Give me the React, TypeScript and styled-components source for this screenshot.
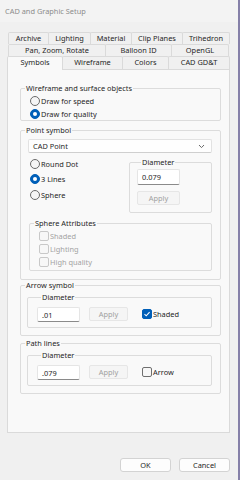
import React from 'react';
import styled, { createGlobalStyle } from 'styled-components';

const GlobalStyle = createGlobalStyle`
  html, body {
    margin: 0;
    padding: 0;
  }
  body {
    font-family: 'Segoe UI', 'Noto Sans', sans-serif;
    font-size: 7.4px;
    color: #262626;
  }
`;

function Radio({ label, checked, top }: { label: string; checked?: boolean; top?: boolean }) {
  return (
    <OptionRow $h={top ? 15.5 : 13}>
      <RadioDot $checked={!!checked} />
      <span>{label}</span>
    </OptionRow>
  );
}

function Check({ label, checked, disabled }: { label: string; checked?: boolean; disabled?: boolean }) {
  return (
    <OptionRow $h={13} $disabled={disabled}>
      <Box $checked={!!checked} $disabled={disabled}>
        {checked && (
          <svg width="8" height="8" viewBox="0 0 8 8">
            <path d="M1.5 4.2 L3.2 5.8 L6.6 2.2" fill="none" stroke="#fff" strokeWidth="1.1" />
          </svg>
        )}
      </Box>
      <span>{label}</span>
    </OptionRow>
  );
}

function DiameterRow({ value, check, checked }: { value: string; check: string; checked?: boolean }) {
  return (
    <InnerGroup>
      <Caption>Diameter</Caption>
      <InlineRow>
        <TextBox>{value}</TextBox>
        <ApplyButton $w={39} $mt={0}>Apply</ApplyButton>
        <Check label={check} checked={checked} />
      </InlineRow>
    </InnerGroup>
  );
}

function App() {
  return (
    <Window>
      <GlobalStyle />
      <TitleBar>CAD and Graphic Setup</TitleBar>
      <TabStack>
        <TabRow $left={8}>
          <Tab $w={41}>Archive</Tab>
          <Tab $w={43}>Lighting</Tab>
          <Tab $w={42}>Material</Tab>
          <Tab $w={52}>Clip Planes</Tab>
          <Tab $w={48}>Trihedron</Tab>
        </TabRow>
        <TabRow $left={8}>
          <Tab $w={98}>Pan, Zoom, Rotate</Tab>
          <Tab $w={67}>Balloon ID</Tab>
          <Tab $w={58}>OpenGL</Tab>
        </TabRow>
        <TabRow $left={7} $h={13}>
          <Tab $w={56} $active>Symbols</Tab>
          <Tab $w={61}>Wireframe</Tab>
          <Tab $w={47}>Colors</Tab>
          <Tab $w={62}>CAD GD&amp;T</Tab>
        </TabRow>
      </TabStack>

      <Panel>
        <Group $mt={18}>
          <Caption>Wireframe and surface objects</Caption>
          <Indent>
            <Radio label="Draw for speed" />
            <Radio label="Draw for quality" checked />
          </Indent>
        </Group>

        <Group $mt={9} $pb={8}>
          <Caption>Point symbol</Caption>
          <Select>
            <span>CAD Point</span>
            <svg width="7" height="5" viewBox="0 0 7 5">
              <path d="M1 1 L3.5 3.6 L6 1" fill="none" stroke="#6a6a6a" strokeWidth="1" />
            </svg>
          </Select>
          <SymbolRow>
            <Indent>
              <Radio label="Round Dot" top />
              <Radio label="3 Lines" checked top />
              <Radio label="Sphere" top />
            </Indent>
            <DiameterBox>
              <Caption>Diameter</Caption>
              <TextBox $h={16}>0.079</TextBox>
              <ApplyButton $w={43} $mt={6}>Apply</ApplyButton>
            </DiameterBox>
          </SymbolRow>
          <SubGroup>
            <Caption>Sphere Attributes</Caption>
            <Indent>
              <Check label="Shaded" disabled />
              <Check label="Lighting" disabled />
              <Check label="High quality" disabled />
            </Indent>
          </SubGroup>
        </Group>

        <Group $mt={5} $pb={7}>
          <Caption>Arrow symbol</Caption>
          <DiameterRow value=".01" check="Shaded" checked />
        </Group>

        <Group $mt={7} $pb={7}>
          <Caption>Path lines</Caption>
          <DiameterRow value=".079" check="Arrow" />
        </Group>
      </Panel>

      <Footer>
        <DialogButton>OK</DialogButton>
        <DialogButton>Cancel</DialogButton>
      </Footer>
    </Window>
  );
}

const Window = styled.div`
  width: 240px;
  height: 480px;
  box-sizing: border-box;
  background: #f0f0f0;
  border-right: 2px solid #8580a8;
  overflow: hidden;
`;
const TitleBar = styled.div`
  height: 22px;
  line-height: 22px;
  padding-left: 5px;
  color: #8c8c8c;
  background: #f3f3f3;
`;
const TabStack = styled.div`
  margin-top: 10px;
  display: flex;
  flex-direction: column;
`;
const TabRow = styled.div<{ $left: number; $h?: number }>`
  display: flex;
  margin-left: ${(p) => p.$left}px;
  height: ${(p) => p.$h || 12}px;
`;
const Tab = styled.div<{ $w: number; $active?: boolean }>`
  position: relative;
  box-sizing: border-box;
  width: ${(p) => p.$w}px;
  margin-right: -1px;
  margin-bottom: ${(p) => (p.$active ? '-1px' : '0')};
  border: 1px solid #dadada;
  border-bottom: 0;
  border-radius: 2px 2px 0 0;
  background: ${(p) => (p.$active ? '#f9f9f9' : '#f0f0f0')};
  text-align: center;
  line-height: ${(p) => (p.$active ? 10 : 11)}px;
  z-index: ${(p) => (p.$active ? 1 : 0)};
`;
const Panel = styled.div`
  box-sizing: border-box;
  margin-left: 7px;
  width: 223px;
  height: 364px;
  background: #f9f9f9;
  border: 1px solid #dadada;
  padding: 0 8px 0 12px;
  display: flex;
  flex-direction: column;
`;
const Group = styled.div<{ $mt: number; $pb?: number }>`
  margin-top: ${(p) => p.$mt}px;
  padding-bottom: ${(p) => p.$pb || 0}px;
  border: 1px solid #dcdcdc;
  border-radius: 2px;
  display: flex;
  flex-direction: column;
`;
const Caption = styled.div`
  align-self: flex-start;
  height: 11px;
  line-height: 11px;
  margin: -6px 0 0 4px;
  padding: 0 1px;
  background: #f9f9f9;
`;
const Indent = styled.div`
  display: flex;
  flex-direction: column;
  padding-left: 9px;
`;
const OptionRow = styled.div<{ $h: number; $disabled?: boolean }>`
  display: flex;
  align-items: center;
  gap: 1px;
  height: ${(p) => p.$h}px;
  color: ${(p) => (p.$disabled ? '#a3a3a3' : 'inherit')};
  white-space: nowrap;
`;
const RadioDot = styled.span<{ $checked: boolean }>`
  box-sizing: border-box;
  width: 10px;
  height: 10px;
  border-radius: 50%;
  flex-shrink: 0;
  display: flex;
  align-items: center;
  justify-content: center;
  border: 1px solid ${(p) => (p.$checked ? '#005fb8' : '#6a6a6a')};
  background: ${(p) => (p.$checked ? '#005fb8' : '#f5f5f5')};
  &::after {
    content: '';
    display: ${(p) => (p.$checked ? 'block' : 'none')};
    width: 4px;
    height: 4px;
    border-radius: 50%;
    background: #fff;
  }
`;
const Box = styled.span<{ $checked: boolean; $disabled?: boolean }>`
  box-sizing: border-box;
  width: 10px;
  height: 10px;
  border-radius: 2px;
  flex-shrink: 0;
  display: flex;
  align-items: center;
  justify-content: center;
  border: 1px solid ${(p) => (p.$checked ? '#005fb8' : p.$disabled ? '#c8c8c8' : '#6f6f6f')};
  background: ${(p) => (p.$checked ? '#005fb8' : '#f7f7f7')};
`;
const Select = styled.div`
  box-sizing: border-box;
  margin: 3px 8px 0 7px;
  height: 14px;
  padding: 0 6px 0 4px;
  display: flex;
  align-items: center;
  justify-content: space-between;
  background: #fefefe;
  border: 1px solid #e2e2e2;
  border-bottom-color: #cfcfcf;
  border-radius: 2px;
`;
const SymbolRow = styled.div`
  display: flex;
  align-items: flex-start;
  margin-top: 3px;
`;
const DiameterBox = styled.div`
  margin: 6px 8px 0 auto;
  width: 83px;
  box-sizing: border-box;
  border: 1px solid #dcdcdc;
  border-radius: 2px;
  padding: 0 0 7px 7px;
  display: flex;
  flex-direction: column;
`;
const TextBox = styled.div<{ $h?: number }>`
  box-sizing: border-box;
  width: 43px;
  height: ${(p) => p.$h || 15}px;
  margin-top: 1px;
  padding-left: 4px;
  display: flex;
  align-items: center;
  background: #fff;
  border: 1px solid #e5e5e5;
  border-bottom: 1px solid #8a8a8a;
  border-radius: 2px;
  flex-shrink: 0;
`;
const ApplyButton = styled.div<{ $w: number; $mt: number }>`
  box-sizing: border-box;
  width: ${(p) => p.$w}px;
  height: 14px;
  margin-top: ${(p) => p.$mt}px;
  display: flex;
  align-items: center;
  justify-content: center;
  background: #f5f5f5;
  border: 1px solid #e6e6e6;
  border-radius: 2px;
  color: #a0a0a0;
  flex-shrink: 0;
`;
const SubGroup = styled.div`
  margin: 10px 8px 0 8px;
  padding-bottom: 2px;
  border: 1px solid #dcdcdc;
  border-radius: 2px;
  display: flex;
  flex-direction: column;
`;
const InnerGroup = styled.div`
  margin: 6px 8px 0 6px;
  padding: 0 0 5px 9px;
  border: 1px solid #dcdcdc;
  border-radius: 2px;
  display: flex;
  flex-direction: column;
`;
const InlineRow = styled.div`
  display: flex;
  align-items: center;
  gap: 9px;
  margin-top: 3px;
  & > :last-child {
    margin-left: 5px;
  }
`;
const Footer = styled.div`
  display: flex;
  justify-content: flex-end;
  gap: 8px;
  margin-top: 25px;
  padding-right: 8px;
`;
const DialogButton = styled.div`
  box-sizing: border-box;
  width: 51px;
  height: 14px;
  display: flex;
  align-items: center;
  justify-content: center;
  background: #fdfdfd;
  border: 1px solid #d3d3d3;
  border-radius: 3px;
`;

export default App;
